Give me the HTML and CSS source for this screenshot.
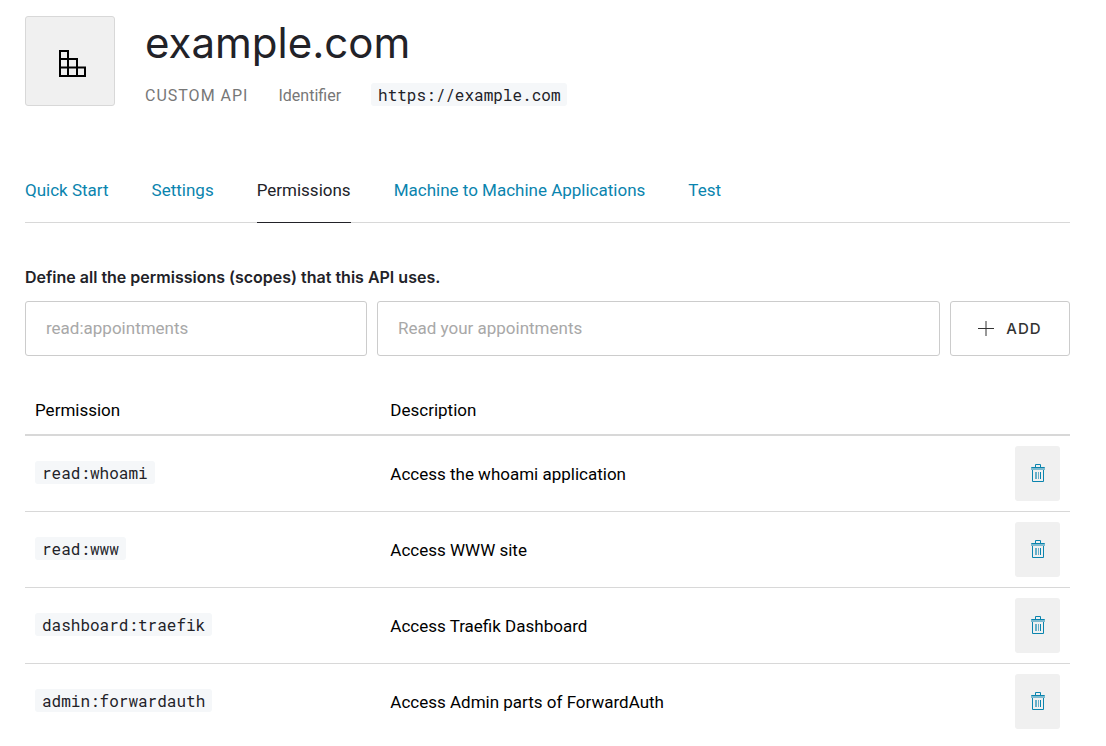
FILE: index.html
```html
<!DOCTYPE html>
<html lang="en">
<head>
<meta charset="utf-8">
<meta name="viewport" content="width=device-width, initial-scale=1">
<title>example.com</title>
<link rel="stylesheet" href="styles.css">
</head>
<body>
<svg class="sprite" aria-hidden="true">
  <symbol id="trash" viewBox="0 0 16 20">
    <path class="trash-lid" d="M1 4h14v3H1z"/>
    <path class="trash-line" d="M5.500 4V1.500h5V4M1.500 4.500h13M2.500 7v11.500h11V7"/>
    <path class="trash-rib" d="M5.500 9v7M6.500 9v7M8.500 9v7"/>
    <path class="trash-line" d="M10.500 9v7"/>
  </symbol>
</svg>
<main class="page">
  <header class="api-header">
    <div class="api-icon">
      <svg width="28" height="28" viewBox="0 0 28 28" aria-hidden="true">
        <path d="M1 1h8v25H1zM1 9h17v17M1 17.500h25V26H1M9 9v17M18 17v9"/>
      </svg>
    </div>
    <div class="api-info">
      <h1 class="api-name">example.com</h1>
      <div class="api-meta">
        <span class="api-type">CUSTOM API</span>
        <span class="api-label">Identifier</span>
        <code class="chip">https://example.com</code>
      </div>
    </div>
  </header>
  <nav class="tabs">
    <a class="tab" href="#quick-start">Quick Start</a>
    <a class="tab" href="#settings">Settings</a>
    <a class="tab tab-active" href="#permissions" aria-current="page">Permissions</a>
    <a class="tab" href="#applications">Machine to Machine Applications</a>
    <a class="tab" href="#test">Test</a>
  </nav>
  <h2 class="form-title">Define all the permissions (scopes) that this API uses.</h2>
  <form class="scope-form">
    <input class="field" type="text" placeholder="read:appointments" aria-label="Permission">
    <input class="field" type="text" placeholder="Read your appointments" aria-label="Description">
    <button class="add-button" type="button">
      <svg width="16" height="16" viewBox="0 0 16 16" aria-hidden="true"><path d="M0 7.500h16M8 0v15"/></svg>
      ADD
    </button>
  </form>
  <table class="scopes">
    <thead>
      <tr><th class="scope-col">Permission</th><th>Description</th><th class="action-col"></th></tr>
    </thead>
    <tbody>
      <tr>
        <td><code class="chip">read:whoami</code></td><td>Access the whoami application</td>
        <td><button class="delete-button" type="button" aria-label="Delete read:whoami"><svg width="16" height="20"><use href="#trash"/></svg></button></td>
      </tr>
      <tr>
        <td><code class="chip">read:www</code></td><td>Access WWW site</td>
        <td><button class="delete-button" type="button" aria-label="Delete read:www"><svg width="16" height="20"><use href="#trash"/></svg></button></td>
      </tr>
      <tr>
        <td><code class="chip">dashboard:traefik</code></td><td>Access Traefik Dashboard</td>
        <td><button class="delete-button" type="button" aria-label="Delete dashboard:traefik"><svg width="16" height="20"><use href="#trash"/></svg></button></td>
      </tr>
      <tr>
        <td><code class="chip">admin:forwardauth</code></td><td>Access Admin parts of ForwardAuth</td>
        <td><button class="delete-button" type="button" aria-label="Delete admin:forwardauth"><svg width="16" height="20"><use href="#trash"/></svg></button></td>
      </tr>
    </tbody>
  </table>
</main>
</body>
</html>
```
FILE: styles.css
```css
* {
  box-sizing: border-box;
}

body {
  margin: 0;
  background: #fff;
  color: #000;
  font-family: Roboto, "Liberation Sans", sans-serif;
  font-size: 17px;
  line-height: 24px;
}

.sprite {
  display: none;
}

.page {
  padding: 16px 36px 16px 25px;
}

.api-header {
  display: flex;
  gap: 30px;
}

.api-icon {
  display: grid;
  place-items: center;
  flex: none;
  width: 90px;
  height: 90px;
  padding-top: 6px;
  padding-left: 5px;
  border: 1px solid #d8d8d8;
  border-radius: 3px;
  background: #f0f0f0;
}

.api-icon path {
  fill: none;
  stroke: #000;
  stroke-width: 2;
}

.api-name {
  margin: 0;
  color: #222228;
  font-family: Inter, sans-serif;
  font-size: 42px;
  font-weight: 400;
  line-height: 54px;
}

.api-meta {
  display: flex;
  align-items: baseline;
  gap: 30px;
  margin-top: 13px;
  color: #777;
  font-size: 16px;
  line-height: 24px;
}

.api-type {
  letter-spacing: 1px;
}

.chip {
  display: inline-block;
  padding: 0 7px;
  border-radius: 3px;
  background: #f5f7f9;
  color: #222228;
  font-family: "Roboto Mono", "Liberation Mono", monospace;
  font-size: 16px;
  line-height: 23px;
  vertical-align: 1px;
}

.tabs {
  display: flex;
  gap: 43px;
  margin-top: 70px;
  border-bottom: 1px solid #d8d8d8;
}

.tab {
  margin-bottom: -1px;
  padding-bottom: 20px;
  border-bottom: 1px solid transparent;
  color: #0a84ae;
  text-decoration: none;
}

.tab-active {
  border-color: #222228;
  color: #222228;
}

.form-title {
  margin: 42px 0 12px;
  color: #222228;
  font-family: Inter, sans-serif;
  font-size: 16px;
  font-weight: 600;
  line-height: 24px;
}

.scope-form {
  display: grid;
  grid-template-columns: 342fr 563fr 120px;
  gap: 10px;
}

.field {
  min-width: 0;
  height: 55px;
  padding: 0 20px 2px;
  border: 1px solid #ccc;
  border-radius: 3px;
  color: #222228;
  font: inherit;
}

.field::placeholder {
  color: #a8a8a8;
}

.add-button {
  display: flex;
  align-items: center;
  justify-content: center;
  gap: 12px;
  border: 1px solid #ccc;
  border-radius: 3px;
  background: #fff;
  color: #333;
  font: 500 15px/24px Inter, sans-serif;
  letter-spacing: 1px;
}

.add-button path {
  stroke: #333;
}

.scopes {
  width: 100%;
  margin-top: 32px;
  border-collapse: separate;
  border-spacing: 0;
  table-layout: fixed;
}

.scopes th {
  padding: 10px 10px 12px;
  border-bottom: 2px solid #d8d8d8;
  font-weight: 400;
  text-align: left;
}

.scope-col {
  width: 34%;
}

.action-col {
  width: 65px;
}

.scopes td {
  padding: 10px;
  border-bottom: 1px solid #d8d8d8;
}

.scopes tbody tr:last-child td {
  border-bottom: 0;
}

.delete-button {
  display: grid;
  place-items: center;
  width: 45px;
  height: 55px;
  padding: 0 0 2px;
  border: 0;
  border-radius: 3px;
  background: #f0f0f0;
}

.trash-line,
.trash-rib {
  fill: none;
  stroke: #0a84ae;
}

.trash-rib {
  opacity: 0.6;
}

.trash-lid {
  fill: #0a84ae;
  opacity: 0.5;
}
```
